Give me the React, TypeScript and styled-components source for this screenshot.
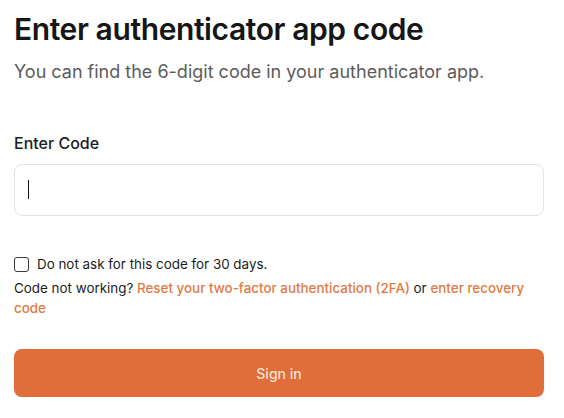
import styled, { createGlobalStyle } from "styled-components";

const GlobalStyle = createGlobalStyle`
  body {
    margin: 0;
    background: #ffffff;
    font-family: Inter, "Noto Sans", Arial, sans-serif;
    color: #1a1a1a;
  }
`;

const Page = styled.div`
  padding: 10px 20px 0 14px;
  display: flex;
  flex-direction: column;
`;

const Title = styled.h1`
  margin: 0;
  font-size: 30px;
  line-height: 38px;
  font-weight: 600;
  letter-spacing: -0.4px;
  color: #161616;
`;

const Subtitle = styled.p`
  margin: 12px 0 0;
  font-size: 18px;
  line-height: 24px;
  color: #5c5c5c;
`;

const Label = styled.label`
  margin-top: 48px;
  font-size: 16px;
  line-height: 22px;
  font-weight: 500;
  color: #1c1c1c;
`;

const Field = styled.div`
  position: relative;
  margin-top: 10px;
  display: flex;
`;

const CodeInput = styled.input`
  flex: 1;
  height: 52px;
  box-sizing: border-box;
  border: 1px solid #e4e4e4;
  border-radius: 8px;
  padding: 0 14px;
  font-size: 18px;
  font-family: inherit;
  outline: none;
  caret-color: transparent;
`;

const Caret = styled.span`
  position: absolute;
  left: 14px;
  top: 16px;
  width: 1px;
  height: 19px;
  background: #111;
  pointer-events: none;
`;

const CheckRow = styled.label`
  margin-top: 38px;
  display: flex;
  align-items: center;
  gap: 8px;
  font-size: 13.4px;
  line-height: 20px;
  color: #1c1c1c;
`;

const Box = styled.span`
  width: 15px;
  height: 15px;
  box-sizing: border-box;
  border: 1px solid #3a3a3a;
  border-radius: 3px;
  flex-shrink: 0;
`;

const Help = styled.p`
  margin: 4px 0 0;
  font-size: 13.4px;
  line-height: 20px;
  color: #1c1c1c;
`;

const Link = styled.a`
  color: #e07a45;
  font-weight: 500;
  text-decoration: none;
`;

const Button = styled.button`
  margin-top: 31px;
  height: 48px;
  border: none;
  border-radius: 8px;
  background: #e16d3b;
  color: #fde3d2;
  font-family: inherit;
  font-size: 14px;
  font-weight: 500;
  box-shadow: 0 1px 2px rgba(0, 0, 0, 0.12);
`;

export default function App() {
  return (
    <>
      <GlobalStyle />
      <Page>
        <Title>Enter authenticator app code</Title>
        <Subtitle>You can find the 6-digit code in your authenticator app.</Subtitle>
        <Label htmlFor="code">Enter Code</Label>
        <Field>
          <CodeInput id="code" />
          <Caret />
        </Field>
        <CheckRow>
          <Box />
          Do not ask for this code for 30 days.
        </CheckRow>
        <Help>
          Code not working? <Link href="#">Reset your two-factor authentication (2FA)</Link> or{" "}
          <Link href="#">enter recovery code</Link>
        </Help>
        <Button>Sign in</Button>
      </Page>
    </>
  );
}
